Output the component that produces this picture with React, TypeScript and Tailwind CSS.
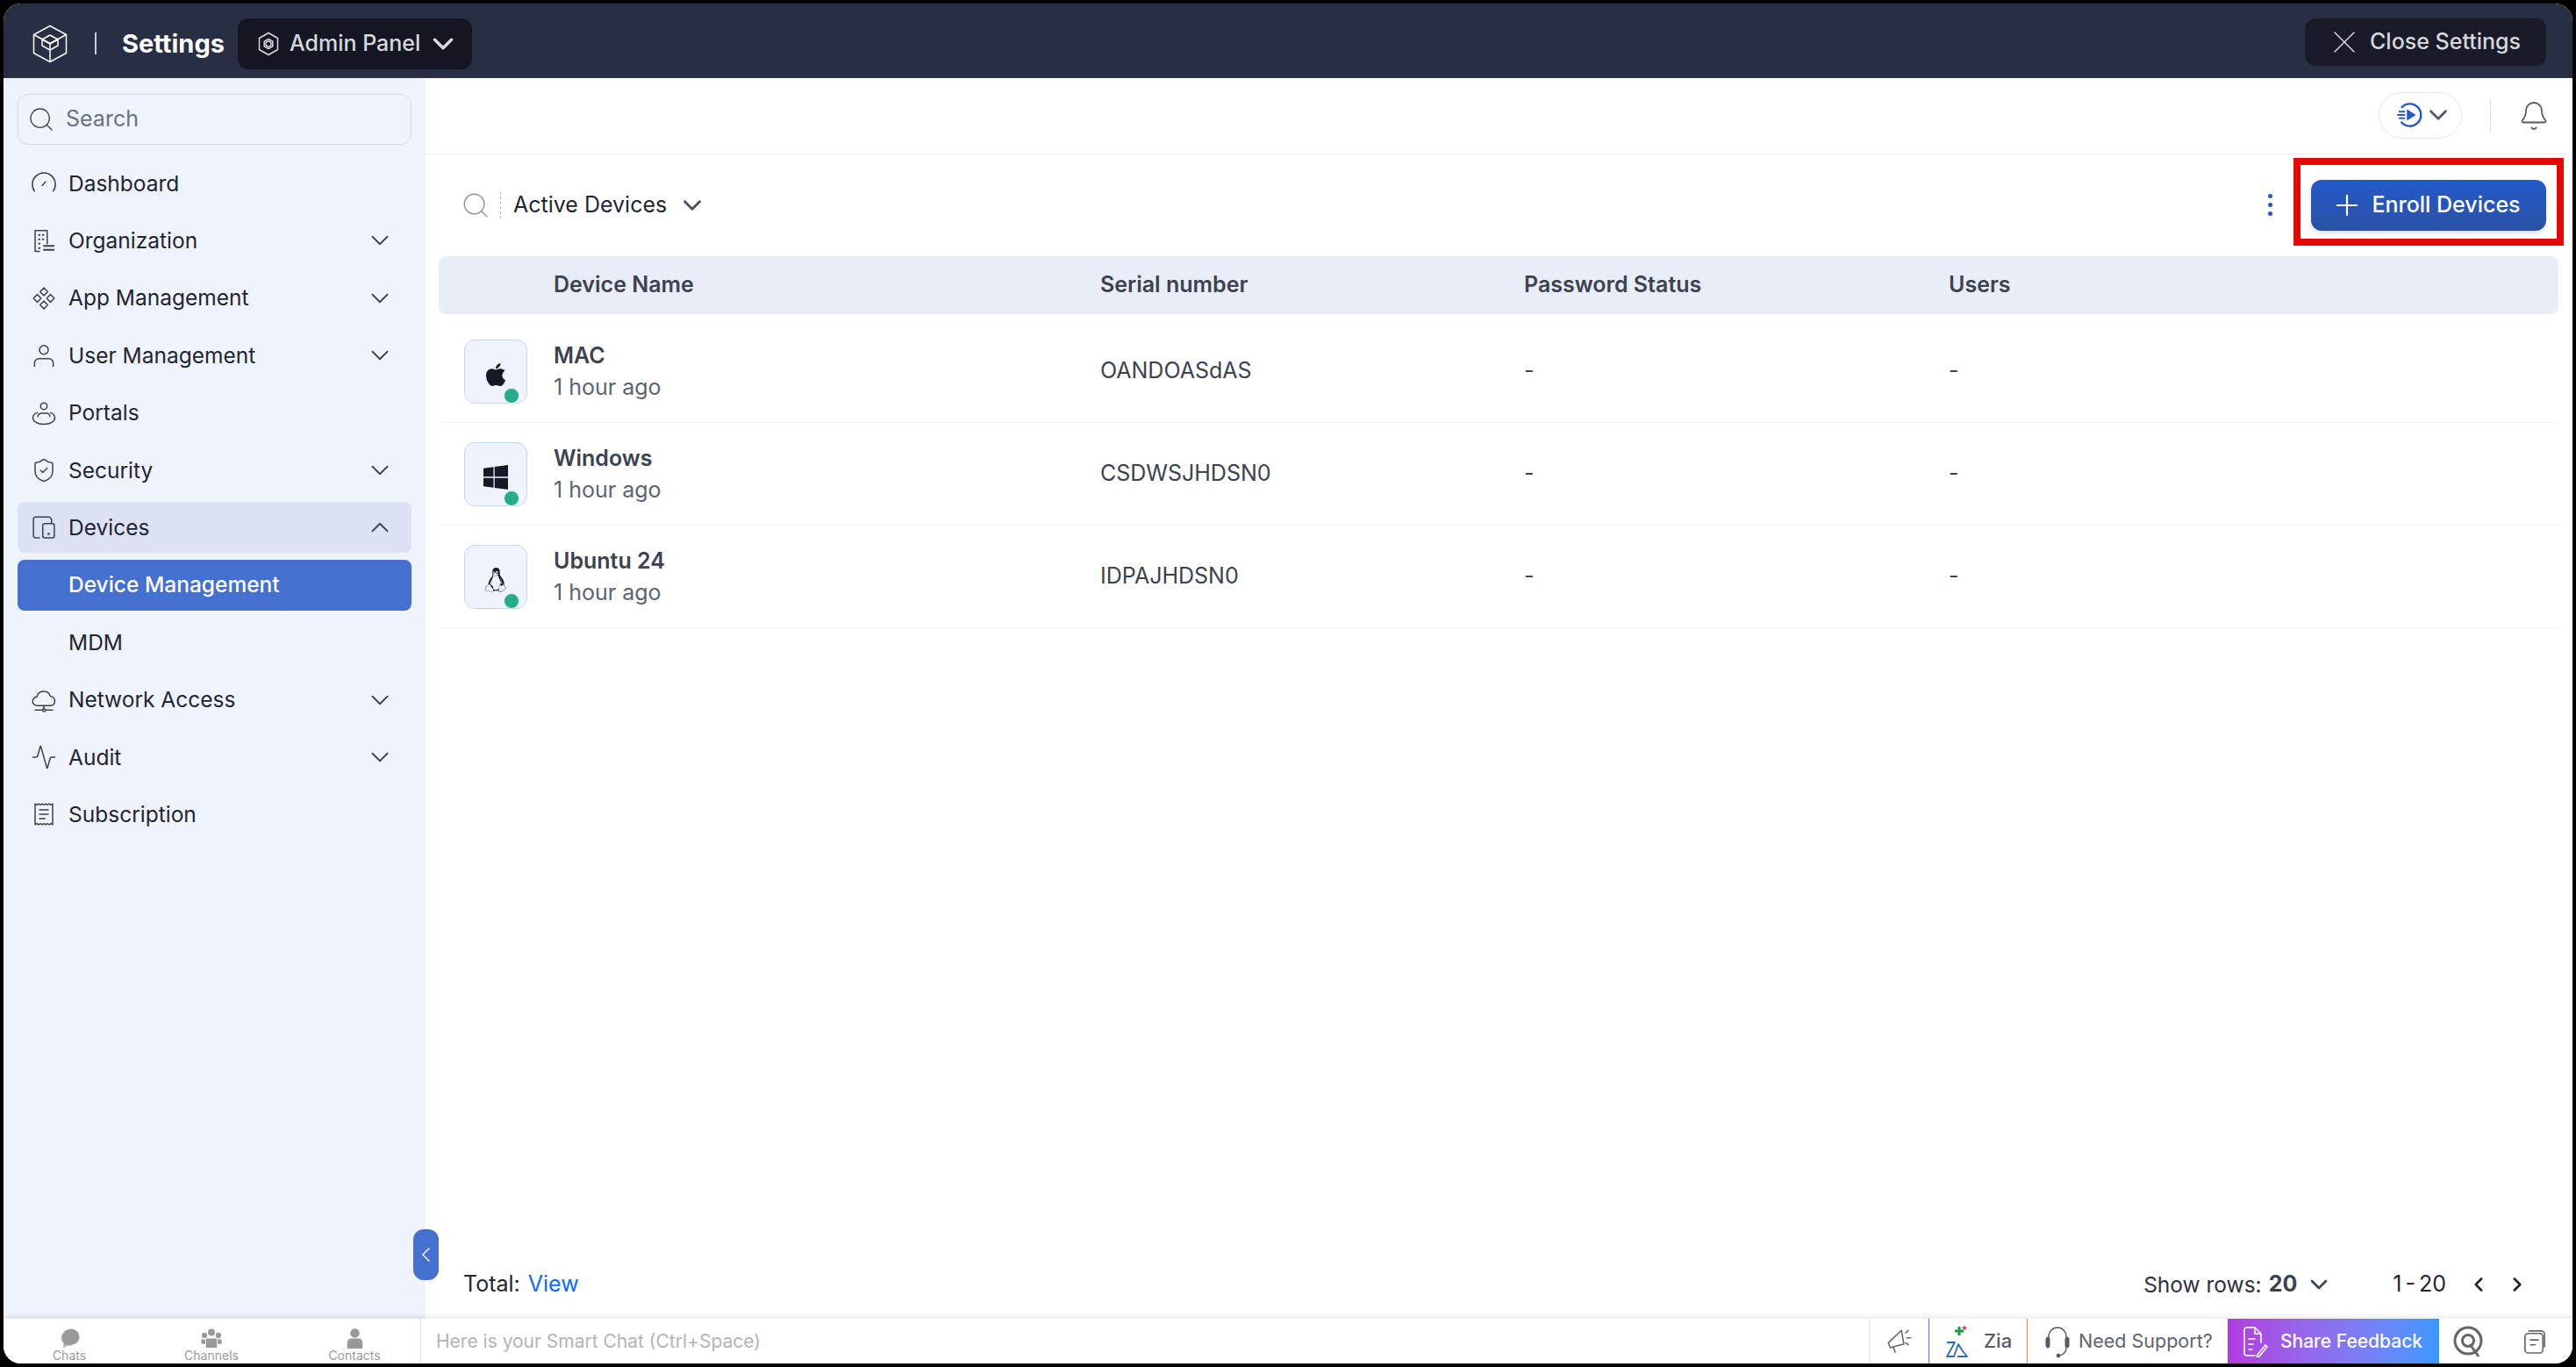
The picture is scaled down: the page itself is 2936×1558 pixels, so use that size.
import { ChevronDown, ChevronUp, ChevronLeft, ChevronRight, Search, X, Plus, Bell, ShieldCheck, Activity } from 'lucide-react';
import { FaApple, FaWindows, FaLinux } from 'react-icons/fa';
import type { ReactNode } from 'react';

const FONT = "Inter, 'Noto Sans', sans-serif";

function Ico({ children, size = 30 }: { children: ReactNode; size?: number }) {
  return (
    <svg width={size} height={size} viewBox="0 0 24 24" fill="none" stroke="currentColor" strokeWidth="1.2" strokeLinecap="round" strokeLinejoin="round">
      {children}
    </svg>
  );
}

const DashIcon = () => (
  <Ico>
    <path d="M3.400 19A10.500 10.500 0 1 1 20.600 19" />
    <path d="M10.500 14l3-3.500" />
  </Ico>
);
const OrgIcon = () => (
  <Ico>
    <path d="M4 22V3h11v12M4 22h4" />
    <path d="M7.500 7h.6M11 7h.6M7.500 11h.6M11 11h.6M7.500 15h.6M7.500 19h.6M12 17h9M12 20.500h9" strokeWidth="1.600" />
  </Ico>
);
const AppIcon = () => (
  <Ico>
    <path d="M12 2.500l3.500 3.500-3.500 3.500L8.500 6zM6 8.500L9.500 12 6 15.500 2.500 12zM18 8.500l3.500 3.500-3.500 3.500-3.500-3.500zM12 14.500l3.500 3.500-3.500 3.500L8.500 18z" />
  </Ico>
);
const UserIcon = () => (
  <Ico>
    <circle cx="12" cy="7" r="4" />
    <path d="M3.500 22v-3a4 4 0 0 1 4-4h9a4 4 0 0 1 4 4v3" />
  </Ico>
);
const PortalIcon = () => (
  <Ico>
    <circle cx="12" cy="5.500" r="3" />
    <path d="M6.500 15a3 3 0 0 1 3-3h5a3 3 0 0 1 3 3" />
    <path d="M6 11.500c-2.500.8-4 2.300-4 4.500 0 3.500 4 6 10 6s10-2.500 10-6c0-2.200-1.500-3.700-4-4.500" />
  </Ico>
);
const DevicesIcon = () => (
  <Ico>
    <path d="M8 21.500H4.500a2 2 0 0 1-2-2v-15a2 2 0 0 1 2-2H16a3 3 0 0 1 3 3v3" />
    <rect x="11" y="8.500" width="10.500" height="13" rx="1.500" />
    <path d="M16.200 18h.2" strokeWidth="2" />
  </Ico>
);
const CloudIcon = () => (
  <Ico>
    <path d="M6 17a4 4 0 0 1-.5-8A6.500 6.500 0 0 1 18 8.500a4.300 4.300 0 0 1 .5 8.500z" />
    <path d="M12 17v3M4 21h6M14 21h6" />
    <circle cx="12" cy="21" r="1.300" />
  </Ico>
);
const ReceiptIcon = () => (
  <Ico>
    <path d="M4 2.500l1.600 1 1.600-1 1.600 1 1.600-1 1.600 1 1.600-1 1.600 1 1.600-1 1.600 1L20 2.500v19l-1.600-1-1.600 1-1.600-1-1.600 1-1.600-1-1.600 1-1.600-1-1.600 1-1.600-1L4 21.500z" />
    <path d="M8 8h8M8 12h8M8 16h5" />
  </Ico>
);

const NAV = [
  { label: 'Dashboard', icon: <DashIcon /> },
  { label: 'Organization', icon: <OrgIcon />, chevron: true },
  { label: 'App Management', icon: <AppIcon />, chevron: true },
  { label: 'User Management', icon: <UserIcon />, chevron: true },
  { label: 'Portals', icon: <PortalIcon /> },
  { label: 'Security', icon: <ShieldCheck size={30} strokeWidth={1.2} />, chevron: true },
  { label: 'Devices', icon: <DevicesIcon />, open: true },
  { label: 'Device Management', active: true },
  { label: 'MDM' },
  { label: 'Network Access', icon: <CloudIcon />, chevron: true },
  { label: 'Audit', icon: <Activity size={30} strokeWidth={1.2} />, chevron: true },
  { label: 'Subscription', icon: <ReceiptIcon /> },
];

const DEVICES = [
  { name: 'MAC', serial: 'OANDOASdAS', icon: <FaApple size={30} /> },
  { name: 'Windows', serial: 'CSDWSJHDSN0', icon: <FaWindows size={32} /> },
  { name: 'Ubuntu 24', serial: 'IDPAJHDSN0', icon: <FaLinux size={28} /> },
];

function Sidebar() {
  return (
    <aside className="w-[481px] shrink-0 bg-[#eff3fb] px-4 pt-[18px]">
      <div className="h-[58px] flex items-center gap-[12px] pl-[10px] rounded-xl border border-[#d5d9e2]">
        <Search size={32} strokeWidth={1} className="text-[#3f4654]" />
        <span className="text-[25px] text-[#6b7280]">Search</span>
      </div>
      <nav className="mt-[15px] flex flex-col gap-[7.4px]">
        {NAV.map((item) => (
          <div
            key={item.label}
            className={`h-[58px] flex items-center rounded-lg pl-[15px] pr-[19px] text-[24.5px] ${
              item.active ? 'bg-[#4470d0] text-white font-medium' : item.open ? 'bg-[#dce2f3] text-[#1f2533]' : 'text-[#1f2533]'
            }`}
          >
            <span className="w-[30px] h-[30px] mr-[13px] shrink-0 text-[#3b4250]">{item.icon}</span>
            <span className="flex-1">{item.label}</span>
            {item.chevron && <ChevronDown size={34} strokeWidth={1.300} className="text-[#3b4250]" />}
            {item.open && <ChevronUp size={34} strokeWidth={1.300} className="text-[#3b4250]" />}
          </div>
        ))}
      </nav>
    </aside>
  );
}

function DeviceTable() {
  return (
    <div className="ml-[15px] mr-[16px]">
      <div className="h-[66px] grid grid-cols-[131px_623px_483px_484px_1fr] items-center rounded-lg bg-[#e9edf8] text-[25px] font-semibold text-[#3b4250]">
        <span />
        <span>Device Name</span>
        <span>Serial number</span>
        <span>Password Status</span>
        <span>Users</span>
      </div>
      <div className="mt-[7px]">
        {DEVICES.map((d) => (
          <div key={d.name} className="h-[117px] grid grid-cols-[131px_623px_483px_484px_1fr] items-center border-b border-[#eef0f4] text-[25px] text-[#3b4250]">
            <div className="pl-[29px]">
              <div className="relative w-[72px] h-[73px] flex items-center justify-center rounded-xl border border-[#c9d6f2] bg-[#eff3fb] text-[#161a26]">
                <span className="mt-[7px]">{d.icon}</span>
                <span className="absolute right-[8px] bottom-[-1px] w-[18px] h-[18px] rounded-full bg-[#26ab8b] border border-[#dff3ee]" />
              </div>
            </div>
            <div>
              <div className="font-semibold leading-[36px]">{d.name}</div>
              <div className="text-[#5c6472] leading-[36px]">1 hour ago</div>
            </div>
            <span>{d.serial}</span>
            <span>-</span>
            <span>-</span>
          </div>
        ))}
      </div>
    </div>
  );
}

function Main() {
  return (
    <main className="relative flex-1 min-w-0 flex flex-col bg-white">
      <div className="h-[87px] shrink-0 flex items-center justify-end border-b border-[#eceef2] pr-[26px]">
        <div className="w-[95px] h-[53px] mt-[-2px] flex items-center pl-[20px] rounded-full border border-[#e2e4e9]">
          <svg width="30" height="30" viewBox="0 0 32 32" fill="none">
            <path d="M6 6.500A13.500 13.500 0 1 1 5.500 25" stroke="#2459c9" strokeWidth="2.600" strokeLinecap="round" />
            <path d="M12 9l11 7-11 7z" fill="#2459c9" />
            <path d="M3 12h6M1 16h8M3 20h6" stroke="#2459c9" strokeWidth="2" strokeLinecap="round" />
          </svg>
          <ChevronDown size={34} strokeWidth={2} className="text-[#555c69]" />
        </div>
        <div className="w-px h-[36px] ml-[32px] mr-[31px] bg-[#d8dade]" />
        <Bell size={36} strokeWidth={1.200} className="text-[#555c69]" />
      </div>

      <div className="h-[116px] shrink-0 flex items-start pt-[4px] pl-[40px] pr-[10px]">
        <div className="h-[108px] flex items-center text-[25px] text-[#1f2533]">
          <Search size={34} strokeWidth={1} className="text-[#8b909a]" />
          <span className="h-[30px] ml-[11px] mr-[14px] border-l border-dashed border-[#b5b8bf]" />
          <span>Active Devices</span>
          <ChevronDown size={34} strokeWidth={2} className="ml-[12px] text-[#4a5160]" />
        </div>
        <div className="flex-1" />
        <div className="h-[100px] flex items-center">
          <div className="flex flex-col gap-[5px] mt-[6px] mr-[24px]">
            <span className="w-[5px] h-[5px] rounded-full bg-[#2459c9]" />
            <span className="w-[5px] h-[5px] rounded-full bg-[#2459c9]" />
            <span className="w-[5px] h-[5px] rounded-full bg-[#2459c9]" />
          </div>
          <div className="w-[308px] h-[100px] flex items-start justify-center pt-[17px] border-[8px] border-[#e60707]">
            <button className="w-[268px] h-[58px] flex items-center justify-center gap-[9px] pr-[7px] rounded-xl bg-gradient-to-b from-[#2359cb] to-[#2a52a3] text-[25px] font-medium text-white shadow-md">
              <Plus size={38} strokeWidth={1.400} />
              Enroll Devices
            </button>
          </div>
        </div>
      </div>

      <DeviceTable />

      <div className="flex-1" />
      <div className="h-[80px] shrink-0 flex items-center pt-[2px] pl-[43px] pr-[50px] text-[25px] text-[#1f2533]">
        <span>Total:</span>
        <span className="ml-[9px] text-[#0a6cf5]">View</span>
        <div className="flex-1" />
        <span className="text-[24.5px] text-[#2c3240]">Show rows:</span>
        <span className="ml-[8px] font-bold text-[#3b4250]">20</span>
        <ChevronDown size={32} strokeWidth={2} className="ml-[9px] text-[#3b4250]" />
        <span className="ml-[68px] [word-spacing:-3px]">1 - 20</span>
        <ChevronLeft size={26} strokeWidth={2.400} className="ml-[24px]" />
        <ChevronRight size={26} strokeWidth={2.400} className="ml-[18px]" />
      </div>

      <button className="absolute left-[-14px] bottom-[44px] w-[29px] h-[58px] flex items-center justify-center rounded-xl bg-[#4470d0] text-white">
        <ChevronLeft size={36} strokeWidth={1} />
      </button>
    </main>
  );
}

function ChatBar() {
  return (
    <footer className="relative z-10 h-[51px] shrink-0 flex items-stretch bg-white shadow-[0_-3px_6px_rgba(0,0,0,0.08)] text-[#9a9a9a]">
      <div className="w-[476px] shrink-0 grid grid-cols-[150px_174px_152px] border-r border-[#e4e4e4]">
        <div className="flex flex-col items-center justify-end pb-[2px]">
          <svg width="26" height="23" viewBox="0 0 28 26" fill="#999">
            <ellipse cx="16" cy="11" rx="11" ry="10.500" />
            <path d="M6 6a10 10 0 0 0 1 14l-1 5 6-3a10 10 0 0 0 5 0z" opacity="0.85" />
          </svg>
          <span className="text-[14px] leading-[15px]">Chats</span>
        </div>
        <div className="flex flex-col items-center justify-end pb-[2px]">
          <svg width="26" height="23" viewBox="0 0 28 26" fill="#999">
            <circle cx="14" cy="5" r="4.500" />
            <circle cx="5" cy="9" r="3.500" />
            <circle cx="23" cy="9" r="3.500" />
            <path d="M8 13h12a1 1 0 0 1 1 1v11H7V14a1 1 0 0 1 1-1z" />
            <path d="M1 14h5v6H1zM22 14h5v6h-5z" />
          </svg>
          <span className="text-[14px] leading-[15px]">Channels</span>
        </div>
        <div className="flex flex-col items-center justify-end pb-[2px]">
          <svg width="21" height="23" viewBox="0 0 24 26" fill="#999">
            <circle cx="12" cy="6" r="6" />
            <path d="M2 26v-8a5 5 0 0 1 5-5h10a5 5 0 0 1 5 5v8z" />
          </svg>
          <span className="text-[14px] leading-[15px]">Contacts</span>
        </div>
      </div>
      <div className="flex-1 flex items-center pl-[17px] text-[21px] text-[#b4b4b4]">Here is your Smart Chat (Ctrl+Space)</div>
      <div className="w-[68px] shrink-0 flex items-center justify-center border-l border-[#e4e4e4] text-[#666]">
        <svg width="34" height="34" viewBox="0 0 24 24" fill="none" stroke="currentColor" strokeWidth="1.100" strokeLinecap="round" strokeLinejoin="round">
          <path d="M13.500 3L3 13l1.500 4 11-3zM7 16.500l1.500 4M17 5l2-2M18 9h3M17 13l2 1.500" />
        </svg>
      </div>
      <div className="w-[112px] shrink-0 flex items-center pl-[18px] gap-[16px] border-l border-[#6a6af0] text-[22px] font-medium text-[#555c69]">
        <svg width="28" height="38" viewBox="0 0 28 38" fill="none">
          <path d="M16 2v10M11 7h10" stroke="#1a9a45" strokeWidth="3" />
          <path d="M22 1v5M19.500 3.500h5" stroke="#e03030" strokeWidth="1.500" />
          <path d="M2 20h9L2 36h8l5-14 5 8 5 6H14" stroke="#2b6cb5" strokeWidth="1.800" strokeLinejoin="round" />
        </svg>
        Zia
      </div>
      <div className="w-[229px] shrink-0 flex items-center pl-[19px] gap-[9px] border-l border-[#f0913c] text-[21.500px] text-[#5c6472]">
        <svg width="30" height="38" viewBox="0 0 30 38" fill="none" stroke="#555c69">
          <path d="M5 16v-3a10 10 0 0 1 20 0v3" strokeWidth="1.400" />
          <rect x="2" y="14" width="4" height="12" rx="2" fill="#555c69" />
          <rect x="24" y="14" width="4" height="12" rx="2" fill="#555c69" />
          <path d="M25 26c0 6-3 8-8 9" strokeWidth="1.400" />
          <circle cx="16" cy="35" r="2" fill="#555c69" />
        </svg>
        Need Support?
      </div>
      <div className="w-[241px] shrink-0 flex items-center pl-[17px] gap-[13px] bg-gradient-to-r from-[#b03ae0] to-[#3399ff] text-[21px] font-medium text-white">
        <svg width="30" height="36" viewBox="0 0 30 36" fill="none" stroke="white" strokeWidth="1.600" strokeLinecap="round" strokeLinejoin="round">
          <path d="M14 34H5a3 3 0 0 1-3-3V5a3 3 0 0 1 3-3h9l7 7v10M14 2v7h7" />
          <path d="M7 15h7M7 21h5M7 27h4M17 33l9-11 2 2-9 11-3 1z" />
        </svg>
        Share Feedback
      </div>
      <div className="w-[152px] shrink-0 flex items-center pl-[15px] gap-[45px]">
        <svg width="36" height="38" viewBox="0 0 36 38" fill="none" stroke="#666" strokeWidth="3">
          <circle cx="18" cy="18" r="15" />
          <circle cx="18" cy="18" r="6.500" />
          <path d="M20 22l10 14" />
        </svg>
        <svg width="26" height="30" viewBox="0 0 28 32" fill="none" stroke="#666" strokeWidth="1.800">
          <rect x="2" y="6" width="22" height="24" rx="4" />
          <path d="M6 3h16a4 4 0 0 1 4 4v16M8 14h11M8 20h7" />
        </svg>
      </div>
    </footer>
  );
}

export default function App() {
  return (
    <div className="w-[2936px] h-[1558px] bg-black p-[4px]" style={{ fontFamily: FONT }}>
      <div className="w-full h-full flex flex-col overflow-hidden rounded-[20px] bg-white">
        <header className="h-[85px] shrink-0 flex items-center bg-[#282e44] pt-[6px] pl-[33px] pr-[30px]">
          <svg width="40" height="44" viewBox="0 0 40 44" fill="none" stroke="white" strokeWidth="1.500" strokeLinejoin="round">
            <path d="M20 1.500L38.500 11.500v21L20 42.500 1.500 32.500v-21z" />
            <path d="M1.500 11.500L20 21.500l18.500-10M20 21.500v21" />
            <path d="M20 12l9 5v7l-9 5-9-5v-7zM11 17l9 5 9-5" />
          </svg>
          <span className="w-[2px] h-[25px] ml-[31px] mr-[29px] bg-[#c9ccd4]" />
          <span className="text-[29px] font-bold text-white">Settings</span>
          <div className="ml-[15px] w-[267px] h-[58px] flex items-center gap-[12px] pl-[23px] rounded-xl bg-[#141722] text-[25px] font-medium text-[#d6d8de]">
            <svg width="24" height="28" viewBox="0 0 24 28" fill="none" stroke="#d6d8de" strokeWidth="1.500" strokeLinejoin="round">
              <path d="M12 1.500l10.500 6v13L12 26.500l-10.500-6v-13z" />
              <circle cx="12" cy="14" r="3" />
              <path d="M12 8.500l4.800 2.700v5.600L12 19.500l-4.800-2.700v-5.600z" />
            </svg>
            <span>Admin Panel</span>
            <ChevronDown size={38} strokeWidth={2.200} className="ml-[-5px] text-[#d6d8de]" />
          </div>
          <div className="flex-1" />
          <div className="w-[275px] h-[54px] mt-[-3px] flex items-center justify-center gap-[7px] pr-[6px] rounded-xl bg-[#191c28] text-[25px] font-medium text-[#d6d8de]">
            <X size={44} strokeWidth={0.800} />
            Close Settings
          </div>
        </header>
        <div className="flex-1 min-h-0 flex">
          <Sidebar />
          <Main />
        </div>
        <ChatBar />
      </div>
    </div>
  );
}
